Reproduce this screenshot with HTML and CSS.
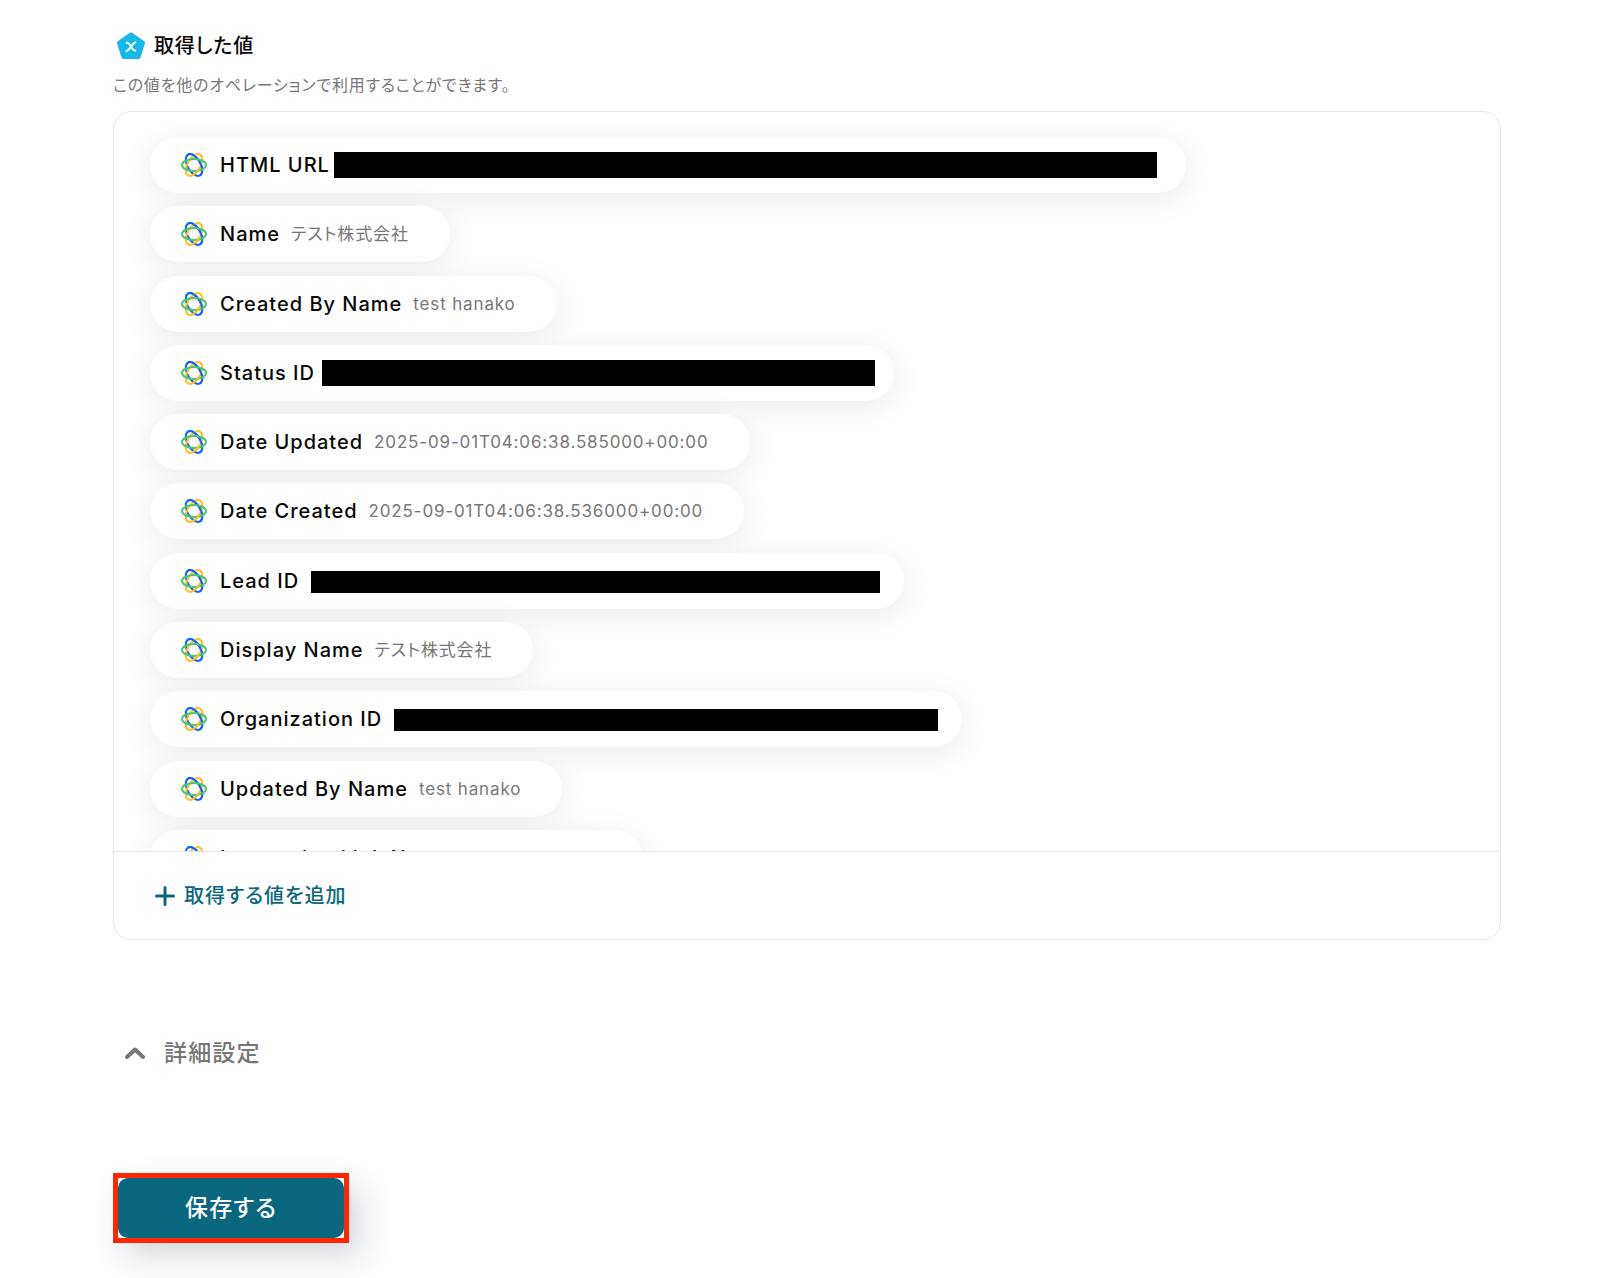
FILE: index.html
```html
<!DOCTYPE html>
<html lang="ja">

<head>
    <meta charset="UTF-8">
    <meta name="viewport" content="width=device-width, initial-scale=1.0">
    <title>取得した値</title>
    <link rel="stylesheet" href="styles.css">
</head>

<body>
    <!-- shared icon for every value chip -->
    <svg class="sprite" aria-hidden="true">
        <symbol id="atom" viewBox="0 0 26 26">
            <g fill="none" stroke-width="2">
                <ellipse cx="13" cy="13" rx="12" ry="6.500" stroke="#1463ff" transform="rotate(60 13 13)" />
                <ellipse cx="13" cy="13" rx="12" ry="6.500" stroke="#ffbf1f" transform="rotate(-60 13 13)" />
                <path d="M1 13A12 6.500 0 0 1 25 13" stroke="#1463ff" transform="rotate(60 13 13)" />
                <ellipse cx="13" cy="13" rx="12" ry="6" stroke="#4cc472" />
                <path d="M1 13A12 6.500 0 0 0 13 19.500" stroke="#ffbf1f" transform="rotate(-60 13 13)" stroke-dasharray="0 9 6 9" />
            </g>
        </symbol>
    </svg>

    <main class="page">
        <section>
            <h2 class="section-title">
                <svg class="title-icon" viewBox="0 0 30 30" aria-hidden="true">
                    <path d="M15 3.500 27 12 22.600 26H7.400L3 12Z" fill="#14b9ea" stroke="#14b9ea" stroke-width="4" stroke-linejoin="round" />
                    <path d="M10.800 11.800C14.300 10.500 15.700 20.800 19.400 19.600M19.400 11.400C16.500 12 13.500 19.500 10.500 20" fill="none" stroke="#fff" stroke-width="2" stroke-linecap="round" />
                </svg>
                取得した値
            </h2>
            <p class="section-note">この値を他のオペレーションで利用することができます。</p>

            <div class="card">
                <div class="card-scroll">
                    <ul class="chips">
                        <li class="chip"><svg class="chip-icon"><use href="#atom" /></svg><span class="label">HTML URL</span><span class="mask mask-url" style="width: 823px"></span></li>
                        <li class="chip"><svg class="chip-icon"><use href="#atom" /></svg><span class="label">Name</span><span class="value">テスト株式会社</span></li>
                        <li class="chip"><svg class="chip-icon"><use href="#atom" /></svg><span class="label">Created By Name</span><span class="value">test hanako</span></li>
                        <li class="chip"><svg class="chip-icon"><use href="#atom" /></svg><span class="label">Status ID</span><span class="mask mask-status" style="width: 553px"></span></li>
                        <li class="chip"><svg class="chip-icon"><use href="#atom" /></svg><span class="label">Date Updated</span><span class="value">2025-09-01T04:06:38.585000+00:00</span></li>
                        <li class="chip"><svg class="chip-icon"><use href="#atom" /></svg><span class="label">Date Created</span><span class="value">2025-09-01T04:06:38.536000+00:00</span></li>
                        <li class="chip"><svg class="chip-icon"><use href="#atom" /></svg><span class="label">Lead ID</span><span class="mask" style="width: 569px"></span></li>
                        <li class="chip"><svg class="chip-icon"><use href="#atom" /></svg><span class="label">Display Name</span><span class="value">テスト株式会社</span></li>
                        <li class="chip"><svg class="chip-icon"><use href="#atom" /></svg><span class="label">Organization ID</span><span class="mask" style="width: 544px"></span></li>
                        <li class="chip"><svg class="chip-icon"><use href="#atom" /></svg><span class="label">Updated By Name</span><span class="value">test hanako</span></li>
                        <li class="chip"><svg class="chip-icon"><use href="#atom" /></svg><span class="label">Integration Link Name</span><span class="value" style="width: 141px"></span></li>
                    </ul>
                </div>
                <div class="card-footer">
                    <button type="button" class="add-button">
                        <svg class="plus" viewBox="0 0 20 20" aria-hidden="true"><path d="M10 1.500V18.500M1.500 10H18.500" /></svg>
                        取得する値を追加
                    </button>
                </div>
            </div>
        </section>

        <button type="button" class="advanced" aria-expanded="false">
            <svg class="chevron" viewBox="0 0 20 12" aria-hidden="true"><path d="M2 10 10 2.500 18 10" /></svg>
            詳細設定
        </button>

        <div class="save-frame">
            <button type="submit" class="save-button">保存する</button>
        </div>
    </main>
</body>

</html>
```
FILE: styles.css
```css
* {
    margin: 0;
    padding: 0;
    box-sizing: border-box;
}

body {
    font-family: Inter, "Noto Sans CJK JP", sans-serif;
    font-feature-settings: "palt";
    letter-spacing: 0.05em;
    background: #fff;
    color: #080808;
}

button {
    font: inherit;
    font-feature-settings: inherit;
    letter-spacing: 0.05em;
    border: none;
    background: none;
    cursor: pointer;
}

.sprite {
    position: absolute;
    width: 0;
    height: 0;
}

.page {
    padding: 31px 99px 36px 113px;
}

.section-title {
    display: flex;
    align-items: center;
    gap: 8px;
    padding-left: 3px;
    font-size: 20px;
    font-weight: 500;
    line-height: 30px;
}

.title-icon {
    width: 30px;
    height: 30px;
}

.section-note {
    margin: 12px 0 14px;
    font-size: 16px;
    line-height: 24px;
    color: #777;
}

.card {
    border: 1px solid #e8e8e8;
    border-radius: 18px;
    overflow: hidden;
}

.card-scroll {
    height: 739px;
    padding: 25px 36px 0;
    overflow: hidden;
}

.chips {
    display: flex;
    flex-direction: column;
    align-items: flex-start;
    justify-content: space-between;
    height: 749px;
    list-style: none;
}

.chip {
    display: flex;
    align-items: center;
    flex-shrink: 0;
    height: 56px;
    padding: 0 41px 0 31px;
    border-radius: 28px;
    background: #fff;
    box-shadow: 0 6px 32px rgba(0, 0, 0, 0.08);
    line-height: 24px;
    white-space: nowrap;
}

.chip-icon {
    width: 26px;
    height: 26px;
    margin-right: 13px;
}

.label {
    font-size: 20px;
    font-weight: 500;
    letter-spacing: 0.05em;
}

.value {
    margin-left: 11px;
    font-size: 17px;
    letter-spacing: 0.05em;
    color: #777;
}

.mask {
    height: 22px;
    margin: 2px -17px 0 12px;
    background: #000;
}

.mask-url {
    height: 26px;
    margin: 0 -12px 0 4px;
}

.mask-status {
    height: 26px;
    margin: 0 -22px 0 7px;
}

.card-footer {
    display: flex;
    align-items: center;
    height: 88px;
    padding: 0 41px;
    border-top: 1px solid #e8e8e8;
}

.add-button {
    display: flex;
    align-items: center;
    gap: 9px;
    font-size: 20px;
    font-weight: 500;
    line-height: 24px;
    color: #0b6780;
}

.plus {
    width: 20px;
    height: 20px;
    fill: none;
    stroke: currentColor;
    stroke-width: 3;
    stroke-linecap: round;
}

.advanced {
    display: flex;
    align-items: center;
    gap: 19px;
    margin: 95px 0 0 12px;
    font-size: 23px;
    font-weight: 500;
    line-height: 36px;
    color: #777;
}

.chevron {
    width: 20px;
    height: 12px;
    fill: none;
    stroke: currentColor;
    stroke-width: 4;
    stroke-linecap: round;
    stroke-linejoin: round;
}

.save-frame {
    width: 236px;
    margin-top: 102px;
    border: 5px solid #ff2600;
    background: #fff;
    box-shadow: 12px 14px 32px rgba(20, 50, 70, 0.18);
}

.save-button {
    display: block;
    width: 100%;
    height: 60px;
    border-radius: 10px;
    background: #0b6780;
    color: #fff;
    font-size: 23px;
    font-weight: 500;
    line-height: 24px;
}
```
